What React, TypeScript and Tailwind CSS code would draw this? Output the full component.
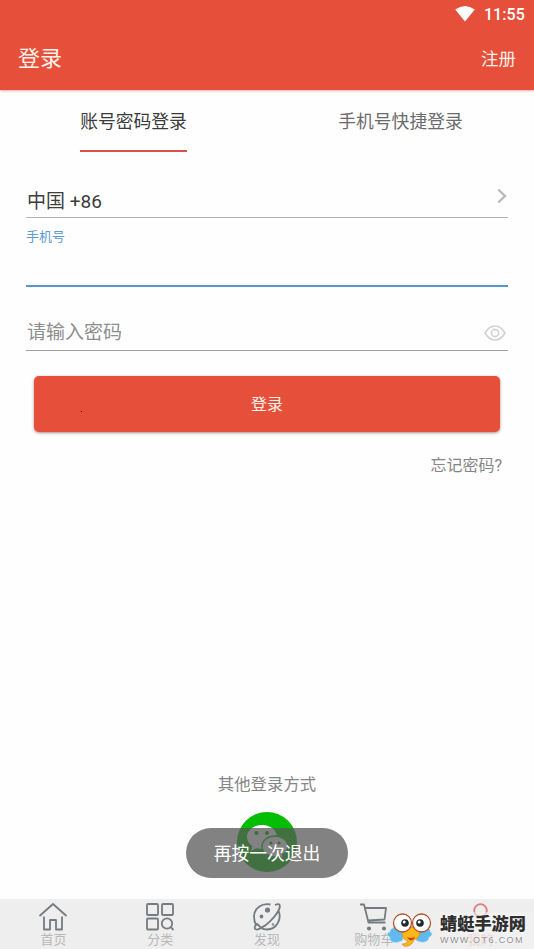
import type { ReactNode } from "react";

function WifiIcon() {
  return (
    <svg className="h-[17px] w-5" viewBox="0 0 20 17" fill="#fff">
      <path d="M.2 3.500Q10-3.500 19.800 3.500L10 15.500Z" />
    </svg>
  );
}

function StatusBar() {
  return (
    <div className="flex h-7 items-center justify-end gap-[9px] pr-[9px] text-white">
      <WifiIcon />
      <span className="pt-0.5 text-base font-medium tracking-[0.1px]">11:55</span>
    </div>
  );
}

function TopBar() {
  return (
    <header className="h-[90px] shrink-0 bg-[#e64f3a] text-[#fff0ea] shadow-[0_1px_2px_rgba(200,60,60,0.45)]">
      <StatusBar />
      <div className="flex h-[62px] items-center justify-between px-[18px]">
        <h1 className="text-[22px] leading-[62px]">登录</h1>
        <a className="text-[17.5px]">注册</a>
      </div>
    </header>
  );
}

function Tabs() {
  return (
    <nav className="grid h-[62px] shrink-0 grid-cols-2 text-[17.8px]">
      <div className="flex justify-center">
        <span className="h-[62px] border-b-2 border-[#d9534a] leading-[64px] text-[#3a3a3a]">账号密码登录</span>
      </div>
      <div className="flex justify-center">
        <span className="leading-[64px] text-[#6b6b6b]">手机号快捷登录</span>
      </div>
    </nav>
  );
}

function EyeIcon() {
  return (
    <svg className="mt-[2px] h-4 w-[22px]" viewBox="0 0 22 16" fill="none" stroke="#d2d2d2" strokeWidth="1.600">
      <path d="M1 8Q5 1 11 1T21 8Q17 15 11 15T1 8Z" strokeLinejoin="round" />
      <circle cx="11" cy="8" r="3.600" />
    </svg>
  );
}

function LoginForm() {
  return (
    <section className="flex shrink-0 flex-col px-[26px]">
      <div className="mt-[30px] flex h-9 items-start justify-between border-b border-[#b2b2b2] pl-px text-[19px] text-[#3d3d3d]">
        <span className="leading-[40px]">中国 +86</span>
        <svg className="mt-[6px] mr-px h-4 w-[10px]" viewBox="0 0 10 16" fill="none" stroke="#bababa" strokeWidth="2.400">
          <path d="M1.200 1.500 8 8 1.200 14.500" />
        </svg>
      </div>
      <div className="h-[69px] border-b-2 border-[#5599cc] pt-2">
        <label className="block text-[13px] leading-[22px] text-[#5b9bd0]">手机号</label>
      </div>
      <div className="flex h-16 items-center justify-between border-b border-[#9f9f9f] pt-[27px] pr-0.5 pl-px text-[19px] text-[#8d8d8d]">
        <span className="pt-0.5 leading-9">请输入密码</span>
        <EyeIcon />
      </div>
      <button className="relative mx-2 mt-[25px] h-14 rounded-[5px] bg-[#e64f3a] pt-0.5 text-base text-[#fff2ec] shadow-[0_1px_3px_rgba(90,30,20,0.5)]">
        登录
        <i className="absolute top-[35px] left-[47px] size-px bg-[#241033]" />
      </button>
      <a className="mt-[22px] self-end pr-[6px] text-base leading-6 text-[#858585]">忘记密码?</a>
    </section>
  );
}

function WechatLogo() {
  return (
    <svg className="size-[60px]" viewBox="0 0 60 60">
      <circle cx="30" cy="30" r="30" fill="#04bd04" />
      <path d="M25 13C16 13 10 18.500 10 25c0 4 2.200 7 5.500 9.300L14 39l5.500-2.800c1.800.5 3.500.8 5.500.8C33.500 37 40 31.500 40 25S33.500 13 25 13Z" fill="#fff" />
      <path d="M38 24c-7.200 0-13 4.600-13 10.500S30.800 45 38 45c1.700 0 3.200-.3 4.700-.7L47 47l-1.200-4.300c3-2 5.200-4.800 5.200-8.200C51 28.600 45.200 24 38 24Z" fill="#fff" stroke="#04bd04" strokeWidth="1.500" />
      <g fill="#079d07">
        <circle cx="19.500" cy="21" r="2" />
        <circle cx="30" cy="21" r="2" />
        <circle cx="34" cy="31" r="1.600" />
        <circle cx="42" cy="31" r="1.600" />
      </g>
    </svg>
  );
}

function OtherLogin() {
  return (
    <section className="relative mt-auto flex h-[127px] shrink-0 flex-col items-center">
      <p className="pt-px text-[16.4px] leading-6 text-[#858585]">其他登录方式</p>
      <div className="mt-[15px]">
        <WechatLogo />
      </div>
      <div className="absolute top-14 left-[186px] flex h-[50px] w-[162px] items-center justify-center rounded-full bg-[#565656]/74 pt-0.5 text-[17.8px] text-white">
        再按一次退出
      </div>
    </section>
  );
}

function NavIcon({ children }: { children: ReactNode }) {
  return (
    <svg className="h-[30px] w-[30px]" viewBox="0 0.5 30 30" fill="none" stroke="#747c80" strokeWidth="1.800" strokeLinejoin="round">
      {children}
    </svg>
  );
}

function NavItem({ label, children, className = "text-[#b8b8b8]" }: { label: string; children: ReactNode; className?: string }) {
  return (
    <div className="flex flex-col items-center pt-[3px]">
      <NavIcon>{children}</NavIcon>
      <span className={`text-[13px] leading-4 ${className}`}>{label}</span>
    </div>
  );
}

function BottomNav() {
  return (
    <nav className="grid h-[50px] shrink-0 grid-cols-5 bg-[#eeeeee]">
      <NavItem label="首页">
        <path d="M1.500 14.500 15 2.500l13.500 12M6 15v13h6v-9.500h6V28h6V15" />
      </NavItem>
      <NavItem label="分类">
        <rect x="2" y="2.500" width="11" height="11" rx="1" />
        <rect x="17" y="2.500" width="11" height="11" rx="1" />
        <rect x="2" y="17" width="11" height="11" rx="1" />
        <circle cx="22" cy="22" r="5.200" />
        <path d="m25.700 25.700 2.800 2.800" />
      </NavItem>
      <NavItem label="发现">
        <path d="M18.500 3C10 1 2 7 2 15c0 4 1 7 2.500 9.200M26.500 9.500C30 17 25 28 15 28c-2.300 0-4.300-.5-6-1.500" />
        <path d="M23 3.500c2-.8 4-1 4.500-.2 1.500 3-3 10-9 16S5 29.500 3.200 27.500c-1-1-.4-3 1.300-5.700" />
        <path d="m4.500 22 4.500 4" />
        <circle cx="15.500" cy="8.500" r="1.700" fill="#747c80" />
        <circle cx="9.500" cy="15" r="1" fill="#747c80" />
        <circle cx="21" cy="23" r=".4" fill="#747c80" />
      </NavItem>
      <NavItem label="购物车">
        <path d="M1 3h4l4.500 18h17M6.500 6.500H27L25.500 18 9 19" />
        <circle cx="10" cy="27" r="1.200" fill="#747c80" />
        <circle cx="25" cy="27" r="1.200" fill="#747c80" />
      </NavItem>
      <NavItem label="我的" className="text-[#f0bcbc]">
        <circle cx="14.500" cy="9" r="6.300" stroke="#e07c7c" />
      </NavItem>
    </nav>
  );
}

function DragonflyMascot() {
  return (
    <svg className="h-[37px] w-[46px] shrink-0" viewBox="0 0 46 37">
      <path d="M15 18C8 14 3 16 3 20c-4 1-3 4 0 5-1 6 7 7 13 3ZM30 18c9-4 14-2 13 2 3 1 2 4-1 5 0 5-7 7-13 3Z" fill="#62b9ed" stroke="#a5d9f7" strokeWidth=".6" />
      <path d="M16 19c2-5 14-5 16 0 2 4-1 8-5 8.500C26 32 22 35 17 34l-2-2c3 0 5-1 6-3-4-1-7-4-5-10Z" fill="#fbb716" stroke="#ce7913" strokeWidth=".6" />
      <path d="M20 25c3 1.500 5 1.500 8-.5-1 4-5 6-8 .5Z" fill="#d93423" />
      <circle cx="15.500" cy="11" r="9" fill="#fff" stroke="#b0522c" strokeWidth="1.300" />
      <circle cx="34.500" cy="11" r="9" fill="#fff" stroke="#b0522c" strokeWidth="1.300" />
      <circle cx="18" cy="11" r="3.800" fill="#23282c" />
      <circle cx="33" cy="11" r="3.800" fill="#23282c" />
      <circle cx="17.200" cy="10" r="1.500" fill="#fff" />
      <circle cx="32.200" cy="10" r="1.500" fill="#fff" />
    </svg>
  );
}

function SiteBadge() {
  return (
    <div className="absolute right-0 bottom-0 flex h-[37px] w-[147px] items-start bg-linear-to-r from-transparent via-[#f1f1f1]/50 via-35% to-[#f3f3f3]/50">
      <DragonflyMascot />
      <div className="ml-[7px] whitespace-nowrap">
        <div className="pt-[3px] text-[17.200px] leading-[19px] font-black text-[#303030] [text-shadow:0_0_2px_#fff,0_0_3px_#fff]">蜻蜓手游网</div>
        <div className="pt-px font-['Liberation_Sans'] text-[9px] leading-[10px] tracking-[1.400px] text-[#909090] [text-shadow:0_0_2px_#fff]">WWW.OT6.COM</div>
      </div>
    </div>
  );
}

export default function App() {
  return (
    <main className="relative flex h-[949px] w-[534px] flex-col overflow-hidden bg-[#fefefe] font-[Roboto,'Noto_Sans_CJK_SC',sans-serif]">
      <TopBar />
      <Tabs />
      <LoginForm />
      <OtherLogin />
      <BottomNav />
      <SiteBadge />
    </main>
  );
}
